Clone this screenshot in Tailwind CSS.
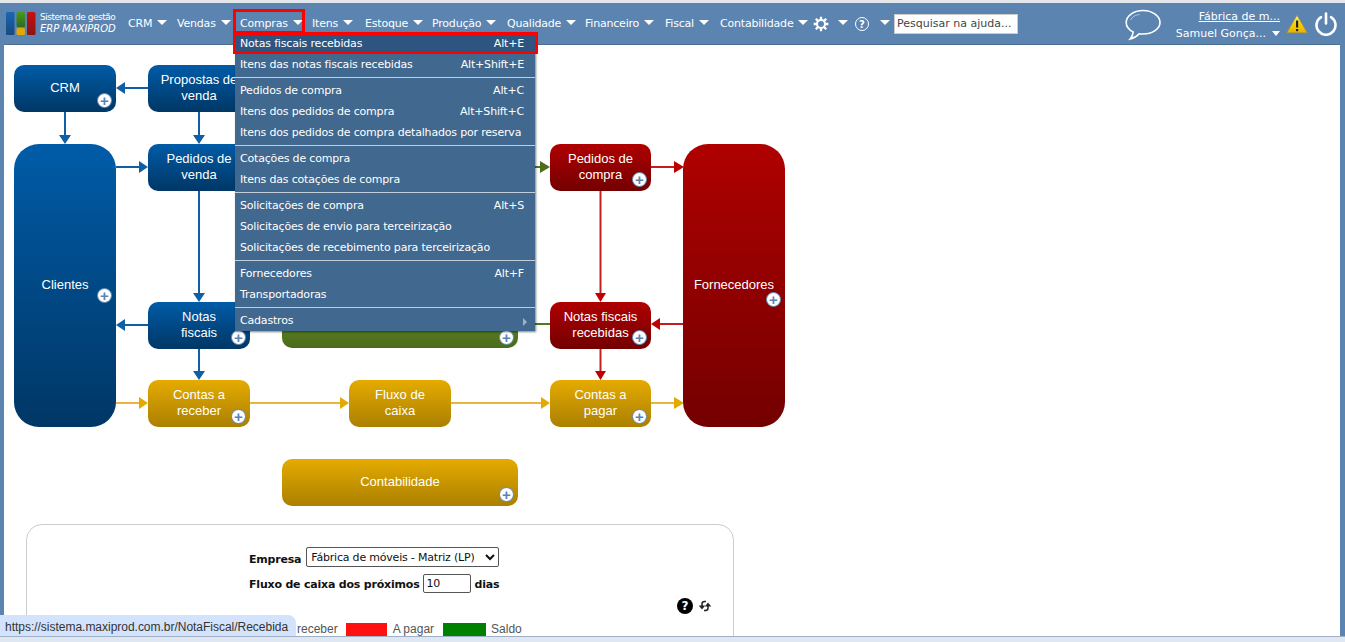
<!DOCTYPE html>
<html lang="pt-BR">
<head>
    <meta charset="UTF-8">
    <title>ERP MAXIPROD</title>
    <script src="https://cdn.jsdelivr.net/npm/@tailwindcss/browser@4"></script>
</head>
<body class="bg-white overflow-hidden">
<div class="relative w-[1345px] h-[642px] overflow-hidden bg-[#5b84b1] pt-[3px] font-['DejaVu_Sans',sans-serif] text-[11px] whitespace-nowrap">
    <div class="absolute top-0 left-0 w-full h-[3px] bg-[#e3e7ec]"></div>

    <!-- header -->
    <nav class="h-[41px] flex items-center text-white relative">
        <div class="w-[128px] pl-[6px] flex items-center gap-[4px]">
            <svg width="30" height="23" viewBox="0 0 30 23">
                <defs>
                    <linearGradient id="lb" x1="0" y1="0" x2="0" y2="1"><stop offset="0" stop-color="#1a66b0"/><stop offset="1" stop-color="#174a80"/></linearGradient>
                    <linearGradient id="lg" x1="0" y1="0" x2="0" y2="1"><stop offset="0" stop-color="#4a9a18"/><stop offset="1" stop-color="#2f6a22"/></linearGradient>
                    <linearGradient id="lr" x1="0" y1="0" x2="0" y2="1"><stop offset="0" stop-color="#c81010"/><stop offset="1" stop-color="#8a1414"/></linearGradient>
                </defs>
                <rect x="0" y="0" width="8.5" height="23" rx="1.5" fill="url(#lb)"/>
                <rect x="10.5" y="0" width="8.5" height="15" rx="1.5" fill="url(#lg)"/>
                <rect x="10.5" y="16" width="8.5" height="7" rx="1.5" fill="#e3a800"/>
                <rect x="21" y="0" width="8.5" height="23" rx="1.5" fill="url(#lr)"/>
            </svg>
            <div class="leading-[12px] -mt-[1px]">
                <div class="text-[9px] tracking-[-0.5px]">Sistema de gestão</div>
                <div class="text-[10px] italic tracking-[-0.05px]">ERP MAXIPROD</div>
            </div>
        </div>
        <div class="flex items-center tracking-[-0.2px]">
            <a class="flex items-center w-[49px] pt-[2px]">CRM<i class="ml-[5px] border-x-[5px] border-t-[5px] border-x-transparent border-t-white -mt-[5px]"></i></a>
            <a class="flex items-center w-[63px] pt-[2px]">Vendas<i class="ml-[5px] border-x-[5px] border-t-[5px] border-x-transparent border-t-white -mt-[5px]"></i></a>
            <a class="flex items-center w-[72px] pt-[2px]">Compras<i class="ml-[5px] border-x-[5px] border-t-[5px] border-x-transparent border-t-white -mt-[5px]"></i></a>
            <a class="flex items-center w-[53px] pt-[2px]">Itens<i class="ml-[5px] border-x-[5px] border-t-[5px] border-x-transparent border-t-white -mt-[5px]"></i></a>
            <a class="flex items-center w-[67px] pt-[2px]">Estoque<i class="ml-[5px] border-x-[5px] border-t-[5px] border-x-transparent border-t-white -mt-[5px]"></i></a>
            <a class="flex items-center w-[75px] pt-[2px]">Produção<i class="ml-[5px] border-x-[5px] border-t-[5px] border-x-transparent border-t-white -mt-[5px]"></i></a>
            <a class="flex items-center w-[78px] pt-[2px]">Qualidade<i class="ml-[5px] border-x-[5px] border-t-[5px] border-x-transparent border-t-white -mt-[5px]"></i></a>
            <a class="flex items-center w-[80px] pt-[2px]">Financeiro<i class="ml-[5px] border-x-[5px] border-t-[5px] border-x-transparent border-t-white -mt-[5px]"></i></a>
            <a class="flex items-center w-[55px] pt-[2px]">Fiscal<i class="ml-[5px] border-x-[5px] border-t-[5px] border-x-transparent border-t-white -mt-[5px]"></i></a>
            <a class="flex items-center w-[93px] pt-[2px]">Contabilidade<i class="ml-[5px] border-x-[5px] border-t-[5px] border-x-transparent border-t-white -mt-[5px]"></i></a>
            <svg width="16" height="16" viewBox="0 0 24 24" fill="none" stroke="#fff">
                <circle cx="12" cy="12" r="6" stroke-width="3"/>
                <path d="M12 1v5M12 18v5M1 12h5M18 12h5M4.200 4.200l3.500 3.500M16.300 16.300l3.500 3.500M4.200 19.800l3.500-3.500M16.300 7.700l3.500-3.500" stroke-width="3.500"/>
            </svg>
            <i class="ml-[9px] border-x-[5px] border-t-[5px] border-x-transparent border-t-white -mt-[3px]"></i>
            <span class="ml-[7px] mt-[1px] w-[14px] h-[14px] rounded-full border-[1.5px] border-white flex items-center justify-center text-[10px] font-bold tracking-normal">?</span>
            <i class="ml-[11px] border-x-[5px] border-t-[5px] border-x-transparent border-t-white -mt-[3px]"></i>
            <input class="ml-[4px] w-[124px] h-[20px] bg-white border border-[#ccc] px-[2px] text-[11px] tracking-normal text-[#444] placeholder:text-[#444] outline-none" placeholder="Pesquisar na ajuda...">
        </div>
        <svg class="ml-[107px] mt-[3px]" width="36" height="32" viewBox="0 0 36 32" fill="none" stroke="#fff" stroke-width="1.600">
            <path d="M18 1.500C8.500 1.500 1.200 7 1.200 13.500c0 4 2.800 7.400 7 9.500-.2 2.500-1.300 5-3 7 3.500-.8 6.800-2.800 9-5.300 1.300.2 2.500.3 3.800.3 9.500 0 17-5.200 17-11.500S27.500 1.500 18 1.500z"/>
            <path d="M5.500 11c1.500-3 4.500-5 9-5.500" stroke-opacity=".5" stroke-width="1"/>
        </svg>
        <div class="ml-[16px] w-[103px] text-right leading-[17px] pt-[2px]">
            <div class="underline">Fábrica de m...</div>
            <div class="flex items-center justify-end">Samuel Gonça...<i class="ml-[6px] border-x-[4px] border-t-[5px] border-x-transparent border-t-white"></i></div>
        </div>
        <svg class="ml-[6px]" width="22" height="20" viewBox="0 0 22 20">
            <defs><linearGradient id="wy" x1="0" y1="0" x2="0" y2="1"><stop offset="0" stop-color="#fff2a0"/><stop offset=".5" stop-color="#f7d000"/><stop offset="1" stop-color="#eab000"/></linearGradient></defs>
            <path d="M11 1 L21.500 19 H.5z" fill="url(#wy)" stroke="#8a8a6a" stroke-width="1"/>
            <rect x="10" y="6.500" width="2.200" height="7" fill="#222"/>
            <rect x="10" y="15" width="2.200" height="2.200" fill="#222"/>
        </svg>
        <svg class="ml-[7px]" width="22" height="24" viewBox="0 0 22 24" fill="none" stroke="#fff" stroke-width="2.600" stroke-linecap="round">
            <path d="M11 1.500v10"/>
            <path d="M6 5.200a9.500 9.500 0 1 0 10 0"/>
        </svg>
    </nav>

    <!-- main white area -->
    <main class="absolute left-[4px] top-[44px] w-[1336px] h-[592px] bg-white border-t border-[#4d6f94]"></main>

    <!-- diagram -->
    <div class="absolute left-0 top-0 w-full h-full font-['Liberation_Sans',sans-serif] text-[13px] leading-[16px] text-white text-center">
        <svg class="absolute left-0 top-0" width="800" height="440" viewBox="0 0 800 440" fill="none" stroke-width="2">
            <g stroke="#0f5fa6" fill="#0f5fa6">
                <path d="M148 88H124"/><path d="M125 82v12l-9-6z" stroke="none"/>
                <path d="M65 112v24"/><path d="M59 135h12l-6 9z" stroke="none"/>
                <path d="M199 112v24"/><path d="M193 135h12l-6 9z" stroke="none"/>
                <path d="M116 167h24"/><path d="M139 161v12l9-6z" stroke="none"/>
                <path d="M199 191v103"/><path d="M193 293h12l-6 9z" stroke="none"/>
                <path d="M148 325h-24"/><path d="M125 319v12l-9-6z" stroke="none"/>
                <path d="M199 349v23"/><path d="M193 371h12l-6 9z" stroke="none"/>
            </g>
            <g stroke="#e8b540" fill="#e3a900">
                <path d="M116 403h24"/><path d="M139 397v12l9-6z" stroke="none"/>
                <path d="M250 403h91"/><path d="M340 397v12l9-6z" stroke="none"/>
                <path d="M451 403h91"/><path d="M541 397v12l9-6z" stroke="none"/>
                <path d="M651 403h25"/><path d="M674 397v12l10-6z" stroke="none"/>
            </g>
            <g stroke="#4e7a1c" fill="#4e6e1c">
                <path d="M518 167h24"/><path d="M540 161v12l10-6z" stroke="none"/>
                <path d="M518 324h32"/>
            </g>
            <g stroke="#c02020" fill="#c00000">
                <path d="M651 167h25"/><path d="M674 161v12l10-6z" stroke="none"/>
                <path d="M600.500 191v103"/><path d="M595 293h11l-5.500 9z" stroke="none"/>
                <path d="M683 324h-24"/><path d="M660 318v12l-9-6z" stroke="none"/>
                <path d="M600.500 349v23"/><path d="M595 371h11l-5.500 9z" stroke="none"/>
            </g>
        </svg>

        <!-- blue nodes -->
        <div class="absolute left-[14px] top-[65px] w-[102px] h-[47px] pb-[1px] rounded-[10px] bg-gradient-to-b from-[#005ca8] to-[#003766] flex items-center justify-center">CRM
            <i class="absolute right-[4px] bottom-[4px] w-[15px] h-[15px] rounded-full bg-white border border-[#5b84b1] flex items-center justify-center not-italic text-[#5b84b1] text-[15px] font-bold leading-[13px]">+</i></div>
        <div class="absolute left-[148px] top-[65px] w-[102px] h-[47px] pb-[2px] rounded-[10px] bg-gradient-to-b from-[#005ca8] to-[#003766] flex items-center justify-center">Propostas de<br>venda</div>
        <div class="absolute left-[14px] top-[144px] w-[102px] h-[283px] pb-[2px] rounded-[25px] bg-gradient-to-b from-[#005ca8] to-[#003766] flex items-center justify-center">Clientes
            <i class="absolute right-[4px] top-[144px] w-[15px] h-[15px] rounded-full bg-white border border-[#5b84b1] flex items-center justify-center not-italic text-[#5b84b1] text-[15px] font-bold leading-[13px]">+</i></div>
        <div class="absolute left-[148px] top-[144px] w-[102px] h-[47px] pb-[2px] rounded-[10px] bg-gradient-to-b from-[#005ca8] to-[#003766] flex items-center justify-center">Pedidos de<br>venda</div>
        <div class="absolute left-[148px] top-[302px] w-[102px] h-[47px] pb-[2px] rounded-[10px] bg-gradient-to-b from-[#005ca8] to-[#003766] flex items-center justify-center">Notas<br>fiscais
            <i class="absolute right-[4px] bottom-[4px] w-[15px] h-[15px] rounded-full bg-white border border-[#5b84b1] flex items-center justify-center not-italic text-[#5b84b1] text-[15px] font-bold leading-[13px]">+</i></div>

        <!-- green node, mostly behind the menu -->
        <div class="absolute left-[282px] top-[302px] w-[236px] h-[46px] rounded-[10px] bg-gradient-to-b from-[#64911f] to-[#4b6b1c]">
            <i class="absolute right-[4px] bottom-[3px] w-[15px] h-[15px] rounded-full bg-white border border-[#5b84b1] flex items-center justify-center not-italic text-[#5b84b1] text-[15px] font-bold leading-[13px]">+</i></div>

        <!-- yellow nodes -->
        <div class="absolute left-[148px] top-[380px] w-[102px] h-[47px] pb-[2px] rounded-[10px] bg-gradient-to-b from-[#e5ab00] to-[#ab8000] flex items-center justify-center">Contas a<br>receber
            <i class="absolute right-[4px] bottom-[3px] w-[15px] h-[15px] rounded-full bg-white border border-[#5b84b1] flex items-center justify-center not-italic text-[#5b84b1] text-[15px] font-bold leading-[13px]">+</i></div>
        <div class="absolute left-[349px] top-[380px] w-[102px] h-[47px] pb-[2px] rounded-[10px] bg-gradient-to-b from-[#e5ab00] to-[#ab8000] flex items-center justify-center">Fluxo de<br>caixa</div>
        <div class="absolute left-[550px] top-[380px] w-[101px] h-[47px] pb-[2px] rounded-[10px] bg-gradient-to-b from-[#e5ab00] to-[#ab8000] flex items-center justify-center">Contas a<br>pagar
            <i class="absolute right-[4px] bottom-[3px] w-[15px] h-[15px] rounded-full bg-white border border-[#5b84b1] flex items-center justify-center not-italic text-[#5b84b1] text-[15px] font-bold leading-[13px]">+</i></div>
        <div class="absolute left-[282px] top-[459px] w-[236px] h-[47px] pb-[2px] rounded-[10px] bg-gradient-to-b from-[#e5ab00] to-[#ab8000] flex items-center justify-center">Contabilidade
            <i class="absolute right-[4px] bottom-[4px] w-[15px] h-[15px] rounded-full bg-white border border-[#5b84b1] flex items-center justify-center not-italic text-[#5b84b1] text-[15px] font-bold leading-[13px]">+</i></div>

        <!-- red nodes -->
        <div class="absolute left-[550px] top-[144px] w-[101px] h-[47px] pb-[2px] rounded-[10px] bg-gradient-to-b from-[#b00000] to-[#740000] flex items-center justify-center">Pedidos de<br>compra
            <i class="absolute right-[4px] bottom-[4px] w-[15px] h-[15px] rounded-full bg-white border border-[#5b84b1] flex items-center justify-center not-italic text-[#5b84b1] text-[15px] font-bold leading-[13px]">+</i></div>
        <div class="absolute left-[550px] top-[302px] w-[101px] h-[47px] pb-[2px] rounded-[10px] bg-gradient-to-b from-[#b00000] to-[#740000] flex items-center justify-center">Notas fiscais<br>recebidas
            <i class="absolute right-[4px] bottom-[4px] w-[15px] h-[15px] rounded-full bg-white border border-[#5b84b1] flex items-center justify-center not-italic text-[#5b84b1] text-[15px] font-bold leading-[13px]">+</i></div>
        <div class="absolute left-[683px] top-[144px] w-[102px] h-[283px] pb-[2px] rounded-[25px] bg-gradient-to-b from-[#b00000] to-[#740000] flex items-center justify-center">Fornecedores
            <i class="absolute right-[4px] top-[148px] w-[15px] h-[15px] rounded-full bg-white border border-[#5b84b1] flex items-center justify-center not-italic text-[#5b84b1] text-[15px] font-bold leading-[13px]">+</i></div>
    </div>

    <!-- cash flow card -->
    <section class="absolute left-[26px] top-[524px] w-[708px] h-[130px] rounded-[16px] border border-[#ccc] bg-white text-[#111] text-[11px] tracking-[-0.2px]">
        <div class="absolute left-[222px] top-[22px] flex font-bold">
            <span class="mt-[5px]">Empresa</span>
            <select class="ml-[5px] w-[193px] h-[20px] border border-[#555] rounded-[2px] font-normal text-[11px] bg-white"><option>Fábrica de móveis - Matriz (LP)</option></select></div>
        <div class="absolute left-[222px] top-[49px] flex items-center gap-[3px] font-bold">
            <span class="mt-[3px]">Fluxo de caixa dos próximos</span>
            <input class="w-[48px] h-[19px] border border-[#555] rounded-[2px] px-[3px] font-normal text-[11px]" value="10">
            <span class="mt-[3px] ml-[1px]">dias</span></div>
        <span class="absolute left-[650px] top-[73px] w-[16px] h-[16px] rounded-full bg-black text-white flex items-center justify-center font-bold text-[12px]">?</span>
        <svg class="absolute left-[671px] top-[74px]" width="14" height="14" viewBox="0 0 14 14" fill="#222">
            <path d="M8 2.500H6.500C4.800 2.500 4 3.500 4 5v3" fill="none" stroke="#222" stroke-width="1.500"/>
            <path d="M.8 6.500h6.400L4 10.500z"/>
            <path d="M6 11.500h1.500c1.700 0 2.500-1 2.500-2.500V6" fill="none" stroke="#222" stroke-width="1.500"/>
            <path d="M6.800 7.500h6.400L10 3.500z"/>
        </svg>
        <div class="absolute left-[270px] top-[95px] flex items-start text-[12px] tracking-normal text-[#555] font-['Liberation_Sans',sans-serif]">receber
            <i class="ml-[8px] mt-[3px] w-[41px] h-[13px] bg-[#ff1111]"></i><span class="ml-[6px]">A pagar</span>
            <i class="ml-[9px] mt-[3px] w-[43px] h-[13px] bg-[#008000]"></i><span class="ml-[5px]">Saldo</span></div>
    </section>

    <!-- dropdown menu -->
    <div class="absolute left-[235px] top-[33px] w-[300px] h-[298px] bg-[#41688e] text-white tracking-[-0.18px] shadow-[1px_1px_2px_rgba(0,0,0,0.5)] flex flex-col">
        <a class="h-[21px] flex items-center justify-between pt-[2px] pl-[5px] pr-[11px] bg-[#2d5580]"><span>Notas fiscais recebidas</span><span>Alt+E</span></a>
        <a class="h-[21px] flex items-center justify-between pt-[2px] pl-[5px] pr-[11px]"><span>Itens das notas fiscais recebidas</span><span>Alt+Shift+E</span></a>
        <hr class="my-[2px] border-[#c4ced8]">
        <a class="h-[21px] flex items-center justify-between pt-[2px] pl-[5px] pr-[11px]"><span>Pedidos de compra</span><span>Alt+C</span></a>
        <a class="h-[21px] flex items-center justify-between pt-[2px] pl-[5px] pr-[11px]"><span>Itens dos pedidos de compra</span><span>Alt+Shift+C</span></a>
        <a class="h-[21px] flex items-center justify-between pt-[2px] pl-[5px] pr-[11px]"><span>Itens dos pedidos de compra detalhados por reserva</span></a>
        <hr class="my-[2px] border-[#c4ced8]">
        <a class="h-[21px] flex items-center justify-between pt-[2px] pl-[5px] pr-[11px]"><span>Cotações de compra</span></a>
        <a class="h-[21px] flex items-center justify-between pt-[2px] pl-[5px] pr-[11px]"><span>Itens das cotações de compra</span></a>
        <hr class="my-[2px] border-[#c4ced8]">
        <a class="h-[21px] flex items-center justify-between pt-[2px] pl-[5px] pr-[11px]"><span>Solicitações de compra</span><span>Alt+S</span></a>
        <a class="h-[21px] flex items-center justify-between pt-[2px] pl-[5px] pr-[11px]"><span>Solicitações de envio para terceirização</span></a>
        <a class="h-[21px] flex items-center justify-between pt-[2px] pl-[5px] pr-[11px]"><span>Solicitações de recebimento para terceirização</span></a>
        <hr class="my-[2px] border-[#c4ced8]">
        <a class="h-[21px] flex items-center justify-between pt-[2px] pl-[5px] pr-[11px]"><span>Fornecedores</span><span>Alt+F</span></a>
        <a class="h-[21px] flex items-center justify-between pt-[2px] pl-[5px] pr-[11px]"><span>Transportadoras</span></a>
        <hr class="my-[2px] border-[#c4ced8]">
        <a class="h-[21px] flex items-center justify-between pt-[2px] pl-[5px] pr-[8px]"><span>Cadastros</span><i class="border-y-[4px] border-l-[4px] border-y-transparent border-l-[#9fb1c4]"></i></a>
    </div>

    <!-- annotation boxes -->
    <div class="absolute left-[233px] top-[9px] w-[72px] h-[25px] border-[3px] border-[#ff0000]"></div>
    <div class="absolute left-[233px] top-[32px] w-[305px] h-[22px] border-[3px] border-[#ff0000]"></div>

    <!-- browser status bubble and bottom strip -->
    <div class="absolute left-0 top-[615px] w-[296px] h-[21px] rounded-tr-[8px] bg-[#d3e3fd] text-[#333] text-[12px] tracking-[-0.02px] font-['Liberation_Sans',sans-serif] pl-[5px] leading-[24px]">https://sistema.maxiprod.com.br/NotaFiscal/Recebida</div>
    <div class="absolute left-0 top-[636px] w-full h-[6px] bg-[#dfe7f3] border-t border-[#9fb0c6]"></div>
</div>
</body>
</html>
